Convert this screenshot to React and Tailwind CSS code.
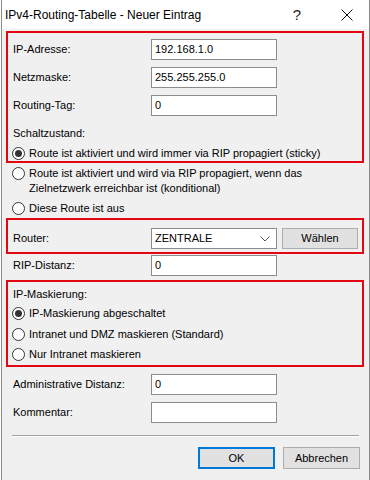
import React from "react";

function Radio({ checked }) {
  return (
    <span className="w-[13px] h-[13px] rounded-full border border-[#333333] bg-white flex items-center justify-center shrink-0">
      {checked && <span className="w-[7px] h-[7px] rounded-full bg-[#333333]" />}
    </span>
  );
}

function Input({ value }) {
  return (
    <div className="w-[126px] h-[21px] border border-[#8c8c8c] bg-white pl-[3px] flex items-center shrink-0">
      {value}
    </div>
  );
}

function Row({ label, value, className = "" }) {
  return (
    <div className={"flex items-center h-[21px] " + className}>
      <div className="w-[138px] shrink-0">{label}</div>
      <Input value={value} />
    </div>
  );
}

function RadioRow({ checked, children, className = "" }) {
  return (
    <div className={"flex items-center h-[16px] gap-[4px] " + className}>
      <Radio checked={checked} />
      <span>{children}</span>
    </div>
  );
}

export default function App() {
  return (
    <div className="w-[370px] h-[480px] bg-white pl-[1px] text-black text-[11px] leading-[13px] font-['Liberation_Sans',Arial,sans-serif]">
      <div className="w-[369px] h-full border-x border-[#8a8a8a] flex flex-col">
        {/* Title bar */}
        <div className="h-[29px] bg-white flex items-center pl-[3px] shrink-0">
          <span className="text-[12px] leading-[14px]">IPv4-Routing-Tabelle - Neuer Eintrag</span>
          <span className="ml-auto text-[15px] leading-[16px] text-[#222]">?</span>
          <svg className="ml-[40px] mr-[16px]" width="12" height="12" viewBox="0 0 12 12">
            <path d="M0.5 0.5 L11.5 11.5 M11.5 0.5 L0.5 11.5" stroke="#111" strokeWidth="1" fill="none" />
          </svg>
        </div>

        {/* Body */}
        <div className="flex-1 bg-[#f0f0f0] pt-[2px] flex flex-col">
          {/* Red box 1 */}
          <div className="ml-[4px] w-[358px] border-2 border-[#e30613] pt-[6px] pl-[5px] flex flex-col">
            <Row label="IP-Adresse:" value="192.168.1.0" />
            <Row label="Netzmaske:" value="255.255.255.0" className="mt-[7px]" />
            <Row label="Routing-Tag:" value="0" className="mt-[7px]" />
            <div className="mt-[10px] h-[14px] flex items-center">Schaltzustand:</div>
            <div className="-ml-[1px]">
              <RadioRow checked className="mt-[5px]">
                Route ist aktiviert und wird immer via RIP propagiert (sticky)
              </RadioRow>
            </div>
          </div>

          {/* Radios outside */}
          <div className="pl-[10px] flex flex-col">
            <div className="mt-[3px] flex gap-[4px] leading-[15px]">
              <span className="mt-[1px]">
                <Radio />
              </span>
              <span>
                Route ist aktiviert und wird via RIP propagiert, wenn das
                <br />
                Zielnetzwerk erreichbar ist (konditional)
              </span>
            </div>
            <RadioRow className="mt-[4px]">Diese Route ist aus</RadioRow>
          </div>

          {/* Red box 2 */}
          <div className="mt-[2px] ml-[4px] w-[358px] border-2 border-[#e30613] pt-[8px] pb-[3px] pl-[5px] flex items-center">
            <div className="w-[138px] shrink-0">Router:</div>
            <div className="w-[126px] h-[21px] border border-[#8c8c8c] bg-white pl-[3px] pr-[6px] flex items-center shrink-0">
              <span>ZENTRALE</span>
              <svg className="ml-auto" width="10" height="6" viewBox="0 0 10 6">
                <path d="M0.5 0.5 L5 5 L9.5 0.5" stroke="#555" strokeWidth="1" fill="none" />
              </svg>
            </div>
            <div className="ml-[5px] w-[76px] h-[21px] border border-[#adadad] bg-[#e1e1e1] flex items-center justify-center">
              Wählen
            </div>
          </div>

          <div className="pl-[11px]">
            <Row label="RIP-Distanz:" value="0" className="mt-[1px]" />
          </div>

          {/* Red box 3 */}
          <div className="mt-[4px] ml-[4px] w-[358px] border-2 border-[#e30613] pt-[5px] pb-[3px] pl-[4px] flex flex-col">
            <div className="h-[14px] flex items-center pl-[1px]">IP-Maskierung:</div>
            <RadioRow checked className="mt-[4px]">IP-Maskierung abgeschaltet</RadioRow>
            <RadioRow className="mt-[5px]">Intranet und DMZ maskieren (Standard)</RadioRow>
            <RadioRow className="mt-[4px]">Nur Intranet maskieren</RadioRow>
          </div>

          <div className="pl-[11px] flex flex-col">
            <Row label="Administrative Distanz:" value="0" className="mt-[7px]" />
            <Row label="Kommentar:" value="" className="mt-[7px]" />
          </div>

          <div className="mt-[12px] ml-[10px] w-[347px] h-[2px] border-t border-[#a0a0a0] border-b border-b-white" />

          <div className="mt-[10px] flex justify-end gap-[8px] pr-[9px]">
            <div className="w-[77px] h-[22px] border-2 border-[#0078d7] bg-[#e1e1e1] flex items-center justify-center">
              OK
            </div>
            <div className="w-[77px] h-[22px] border border-[#adadad] bg-[#e1e1e1] flex items-center justify-center">
              Abbrechen
            </div>
          </div>
        </div>
      </div>
    </div>
  );
}
